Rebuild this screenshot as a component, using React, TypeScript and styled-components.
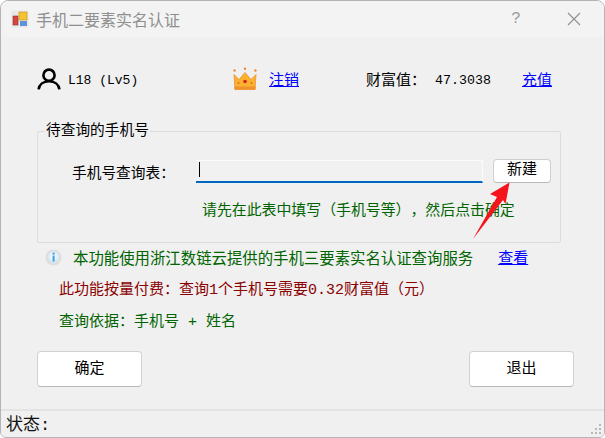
import React from "react";
import styled, { createGlobalStyle } from "styled-components";

const Global = createGlobalStyle`
  * { box-sizing: border-box; text-spacing-trim: space-all; font-feature-settings: "chws" 0, "palt" 0; }
  html, body { margin: 0; padding: 0; background: #fff; }
  body { font-family: "Liberation Mono", "Noto Sans CJK SC", monospace; }
`;
const cjk = `"Liberation Mono", "Noto Sans CJK SC", monospace`;

const Win = styled.div`
  width: 605px; height: 438px; display: flex; flex-direction: column;
  background: #f0f0f0; border: 1px solid #b4b4b4; border-radius: 8px 8px 6px 6px; overflow: hidden; position: relative;
  font-family: ${cjk}; font-size: 15px; color: #000;
`;
const TitleBar = styled.div`
  height: 36px; flex: none; display: flex; align-items: center; padding: 0 0 0 10px; background: #f3f3f3;
`;
const Title = styled.span`
  margin-left: 7px; font-size: 16px; color: #8f8f8f; flex: 1; letter-spacing: 0;
`;
const TitleButton = styled.span<{ $w: number }>`
  width: ${p => p.$w}px; display: flex; justify-content: center; align-items: center; color: #999; font-size: 16px;
`;
const Body = styled.div`
  flex: 1; display: flex; flex-direction: column; padding: 0 30px 0 36px;
`;
const Account = styled.div`
  height: 46px; margin-top: 19px; display: flex; align-items: center; font-size: 13px;
`;
const Gap = styled.span<{ $w: number }>`
  display: inline-block; flex: none; width: ${p => p.$w}px;
`;
const Plain = styled.span<{ $w: number; $size: number }>`
  width: ${p => p.$w}px; flex: none; white-space: nowrap; font-size: ${p => p.$size}px; padding-top: 2px;
`;
const CjkLabel = styled.span`
  font-size: 15px; white-space: nowrap;
`;
const Link = styled.a`
  color: #0000ff; text-decoration: underline; font-size: 15px; white-space: nowrap; cursor: pointer;
`;
const Group = styled.fieldset`
  margin: 20px 0 0; padding: 0; height: 121px; border: 1px solid #dcdcdc; border-radius: 2px; min-width: 0; width: 524px;
  display: flex; flex-direction: column;
`;
const Legend = styled.legend`
  margin-left: 7px; padding: 0 1px; font-size: 14.7px; line-height: 18px;
`;
const QueryRow = styled.div`
  display: flex; align-items: center; height: 24px; margin-top: 19px; padding-left: 34px;
`;
const QueryLabel = styled.span`
  width: 124px; flex: none; font-size: 14.7px; white-space: nowrap;
`;
const FieldBox = styled.div`
  width: 287px; height: 23px; flex: none; background: #f1f1f1; border-top: 1px solid #fafafa; border-right: 1px solid #fafafa; border-bottom: 2px solid #0067c0;
  display: flex; align-items: center; padding-left: 3px; 
`;
const Caret = styled.span`
  display: block; width: 1px; height: 15px; background: #000; margin-top: -2px;
`;
const SmallButton = styled.button`
  margin-left: 10px; width: 58px; height: 24px; flex: none; background: #fff; border: 1px solid #cfcfcf; border-bottom-color: #b8b8b8; border-radius: 4px;
  font: 15px ${cjk}; padding: 0; color: #000; line-height: 18px; padding-bottom: 1px;
`;
const Hint = styled.div`
  margin: 15px 0 0 164px; color: #006400; font-size: 14.9px; white-space: nowrap;
`;
const InfoRow = styled.div`
  display: flex; align-items: center; height: 20px; margin-top: 4px; padding-left: 8px; color: #006400; font-size: 15.4px; white-space: nowrap;
`;
const Line = styled.div<{ $c: string; $mt: number }>`
  color: ${p => p.$c}; margin: ${p => p.$mt}px 0 0 22px; font-size: 15px; line-height: 20px; white-space: nowrap;
`;
const Buttons = styled.div`
  display: flex; justify-content: space-between; margin-top: 18px; width: 537px;
`;
const BigButton = styled.button`
  width: 105px; height: 36px; background: #fff; border: 1px solid #d2d2d2; border-bottom-color: #b8b8b8; border-radius: 4px;
  font: 15px ${cjk}; color: #000; padding: 0 0 4px;
`;
const Status = styled.div`
  height: 28px; flex: none; border-top: 2px solid #e3e3e3; background: #f0f0f0; display: flex; align-items: center; justify-content: space-between;
  padding: 0 0 3px 5px; font-size: 17px; color: #111;
`;
const Grip = styled.svg`
  align-self: flex-end; margin: 0 1px -2px 0;
`;
const Arrow = styled.svg`
  position: absolute; left: 0; top: 0; pointer-events: none;
`;

const AppIcon = () => (
  <svg width="18" height="18" viewBox="0 0 18 18">
    <rect x="0.5" y="0.5" width="17" height="17" fill="#e8e8e8" />
    <rect x="2" y="6" width="5" height="9" fill="#d8453f" stroke="#8c3330" strokeWidth="0.6" />
    <rect x="8" y="2" width="8" height="8" fill="#f4c430" stroke="#c58b12" strokeWidth="0.6" />
    <rect x="9" y="11" width="7" height="5" fill="#5c93dc" />
  </svg>
);
const Person = () => (
  <svg width="24" height="24" viewBox="0 0 24 24" fill="none" stroke="#000" strokeWidth="2.6">
    <circle cx="12" cy="8.2" r="5.6" />
    <path d="M1.6 22.4c.6-5 4.8-8.2 10.4-8.2s9.8 3.2 10.4 8.2" />
  </svg>
);
const Crown = () => (
  <svg width="24" height="24" viewBox="0 0 24 24">
    <path d="M1 7.5l5 5 6-7 6 7 5-5-1 15H2z" fill="#fbb22e" stroke="#e98a2a" strokeWidth="0.7" />
    <rect x="1.4" y="19.5" width="21.2" height="3" fill="#f0922c" />
    <circle cx="12" cy="14.5" r="1.8" fill="#d2231f" />
    <circle cx="5.5" cy="16" r="1" fill="#e2682a" />
    <circle cx="18.5" cy="16" r="1" fill="#e2682a" />
    <circle cx="1.6" cy="3.5" r="1.2" fill="#ea8a3a" />
    <circle cx="12" cy="1.8" r="1.2" fill="#ea8a3a" />
    <circle cx="22.4" cy="3.5" r="1.2" fill="#ea8a3a" />
  </svg>
);
const Info = () => (
  <svg width="17" height="17" viewBox="0 0 17 17">
    <defs>
      <radialGradient id="g" cx="50%" cy="45%" r="55%">
        <stop offset="0%" stopColor="#ffffff" />
        <stop offset="100%" stopColor="#cfe3f0" />
      </radialGradient>
    </defs>
    <circle cx="8.5" cy="8.5" r="8" fill="#dedede" />
    <circle cx="8.5" cy="8" r="6" fill="url(#g)" />
    <rect x="7.6" y="3.6" width="2" height="2" fill="#3aa0e0" />
    <rect x="7.6" y="6.5" width="2" height="6" fill="#3aa0e0" />
  </svg>
);

export default function App() {
  return (
    <>
      <Global />
      <Win>
        <TitleBar>
          <AppIcon />
          <Title>手机二要素实名认证</Title>
          <TitleButton $w={40}>?</TitleButton>
          <Gap $w={18} />
          <TitleButton $w={40}>
            <svg width="14" height="14" viewBox="0 0 14 14" stroke="#909090" strokeWidth="1.1"><path d="M1 1l12 12M13 1L1 13" /></svg>
          </TitleButton>
          <Gap $w={10} />
        </TitleBar>
        <Body>
          <Account>
            <Gap $w={-2} />
            <Person />
            <Gap $w={7} />
            <Plain $w={165} $size={13}>L18 (Lv5)</Plain>
            <Crown />
            <Gap $w={12} />
            <Link>注销</Link>
            <Gap $w={67} />
            <CjkLabel>财富值：</CjkLabel>
            <Gap $w={9} />
            <Plain $w={87} $size={13.3}>47.3038</Plain>
            <Link>充值</Link>
          </Account>
          <Group>
            <Legend>待查询的手机号</Legend>
            <QueryRow>
              <QueryLabel>手机号查询表：</QueryLabel>
              <FieldBox><Caret /></FieldBox>
              <SmallButton>新建</SmallButton>
            </QueryRow>
            <Hint>请先在此表中填写（手机号等），然后点击确定</Hint>
          </Group>
          <InfoRow>
            <Info />
            <Gap $w={11} />
            本功能使用浙江数链云提供的手机三要素实名认证查询服务
            <Gap $w={25} />
            <Link>查看</Link>
          </InfoRow>
          <Line $c="#8b0000" $mt={14}>此功能按量付费：查询1个手机号需要0.32财富值（元）</Line>
          <Line $c="#006400" $mt={12}>查询依据：手机号 + 姓名</Line>
          <Buttons>
            <BigButton>确定</BigButton>
            <BigButton>退出</BigButton>
          </Buttons>
        </Body>
        <Status>
          状态:
          <Grip width="13" height="13" viewBox="0 0 13 13" fill="#b8b8b8">
            <rect x="9" y="1" width="2" height="2" />
            <rect x="5" y="5" width="2" height="2" /><rect x="9" y="5" width="2" height="2" />
            <rect x="1" y="9" width="2" height="2" /><rect x="5" y="9" width="2" height="2" /><rect x="9" y="9" width="2" height="2" />
          </Grip>
        </Status>
        <Arrow width="605" height="438" viewBox="1 1 605 438">
          <path d="M509.5 182.5L490 194L497 197L473 239L503 200L505.5 204Z" fill="#f5141c" />
        </Arrow>
      </Win>
    </>
  );
}
